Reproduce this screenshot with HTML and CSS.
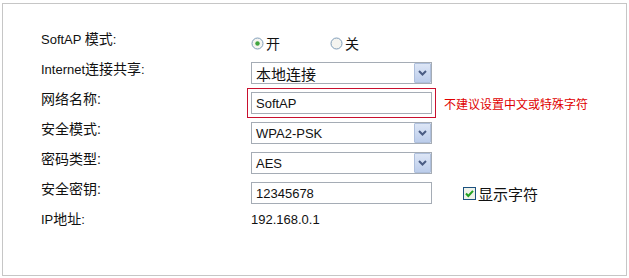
FILE: index.html
```html
<!DOCTYPE html>
<html>
<head>
<meta charset="utf-8">
<link rel="stylesheet" href="styles.css">
</head>
<body>
<div class="panel">
  <div class="form">
    <div class="row">
      <div class="label">SoftAP <span class="zh">模式</span>:</div>
      <div class="ctrl">
        <label class="opt">
          <svg class="radio" width="13" height="13" viewBox="0 0 13 13"><circle cx="6.5" cy="6.5" r="5.5" fill="#f4f4f0" stroke="#7f9db9"/><circle cx="6.5" cy="6.5" r="2.2" fill="#3fa43f"/></svg>
          <span class="zh">开</span>
        </label>
        <label class="opt">
          <svg class="radio" width="13" height="13" viewBox="0 0 13 13"><circle cx="6.5" cy="6.5" r="5.5" fill="#f4f4f0" stroke="#7f9db9"/></svg>
          <span class="zh">关</span>
        </label>
      </div>
    </div>
    <div class="row">
      <div class="label">Internet<span class="zh">连接共享</span>:</div>
      <div class="ctrl">
        <div class="select"><span class="val zh-lg">本地连接</span><span class="btn"><svg width="9" height="6" viewBox="0 0 9 6"><path d="M1 1 L4.5 4.5 L8 1" fill="none" stroke="#4a5c84" stroke-width="2"/></svg></span></div>
      </div>
    </div>
    <div class="row">
      <div class="label zh">网络名称:</div>
      <div class="ctrl">
        <div class="input warn">SoftAP</div>
        <span class="msg">不建议设置中文或特殊字符</span>
      </div>
    </div>
    <div class="row">
      <div class="label zh">安全模式:</div>
      <div class="ctrl">
        <div class="select"><span class="val">WPA2-PSK</span><span class="btn"><svg width="9" height="6" viewBox="0 0 9 6"><path d="M1 1 L4.5 4.5 L8 1" fill="none" stroke="#4a5c84" stroke-width="2"/></svg></span></div>
      </div>
    </div>
    <div class="row">
      <div class="label zh">密码类型:</div>
      <div class="ctrl">
        <div class="select"><span class="val">AES</span><span class="btn"><svg width="9" height="6" viewBox="0 0 9 6"><path d="M1 1 L4.5 4.5 L8 1" fill="none" stroke="#4a5c84" stroke-width="2"/></svg></span></div>
      </div>
    </div>
    <div class="row">
      <div class="label zh">安全密钥:</div>
      <div class="ctrl">
        <div class="input">12345678</div>
        <label class="check">
          <svg width="13" height="13" viewBox="0 0 13 13"><rect x="0.5" y="0.5" width="12" height="12" fill="#eef2ea" stroke="#1c5180"/><path d="M3 6.5 L5.3 9 L10 3.8" fill="none" stroke="#21a121" stroke-width="2"/></svg>
          <span class="zh-lg">显示字符</span>
        </label>
      </div>
    </div>
    <div class="row">
      <div class="label">IP<span class="zh">地址</span>:</div>
      <div class="ctrl text">192.168.0.1</div>
    </div>
  </div>
</div>
</body>
</html>
```

FILE: styles.css
```css
html, body {
  margin: 0;
  padding: 0;
  background: #ffffff;
}
body {
  font-family: "Liberation Sans", "Noto Sans CJK SC", sans-serif;
  font-size: 13px;
  color: #111;
}
.zh {
  font-size: 14px;
}
.zh-lg {
  font-size: 15px;
}
.panel {
  margin: 3px 0 0 2px;
  width: 623px;
  height: 271px;
  border: 1px solid #c6c6c6;
}
.form {
  padding: 28px 0 0 38px;
  display: flex;
  flex-direction: column;
}
.row {
  display: flex;
  height: 30px;
  align-items: flex-start;
}
.label {
  width: 210px;
  line-height: 15px;
  height: 15px;
  white-space: nowrap;
}
.ctrl {
  display: flex;
  align-items: center;
  height: 22px;
}
.ctrl.text {
  height: 15px;
  line-height: 15px;
}
.opt {
  display: flex;
  align-items: center;
  width: 79px;
}
.radio {
  margin-right: 2px;
}
.select, .input {
  box-sizing: border-box;
  width: 181px;
  height: 22px;
  border: 1px solid #a5acb5;
  display: flex;
  align-items: center;
  padding-left: 4px;
  background: #fff;
}
.select .val {
  flex: 1;
}
.select .btn {
  box-sizing: border-box;
  width: 17px;
  height: 20px;
  border: 1px solid #aebfdc;
  border-radius: 1px;
  background: linear-gradient(#dde6f6, #bccdeb);
  display: flex;
  align-items: center;
  justify-content: center;
}
.input.warn {
  outline: 1px solid #c8102e;
  outline-offset: 3px;
}
.msg {
  color: #e00000;
  font-size: 12px;
  margin-left: 12px;
  white-space: nowrap;
}
.check {
  display: flex;
  align-items: center;
  margin-left: 31px;
}
.check svg {
  margin-right: 2px;
}
```
